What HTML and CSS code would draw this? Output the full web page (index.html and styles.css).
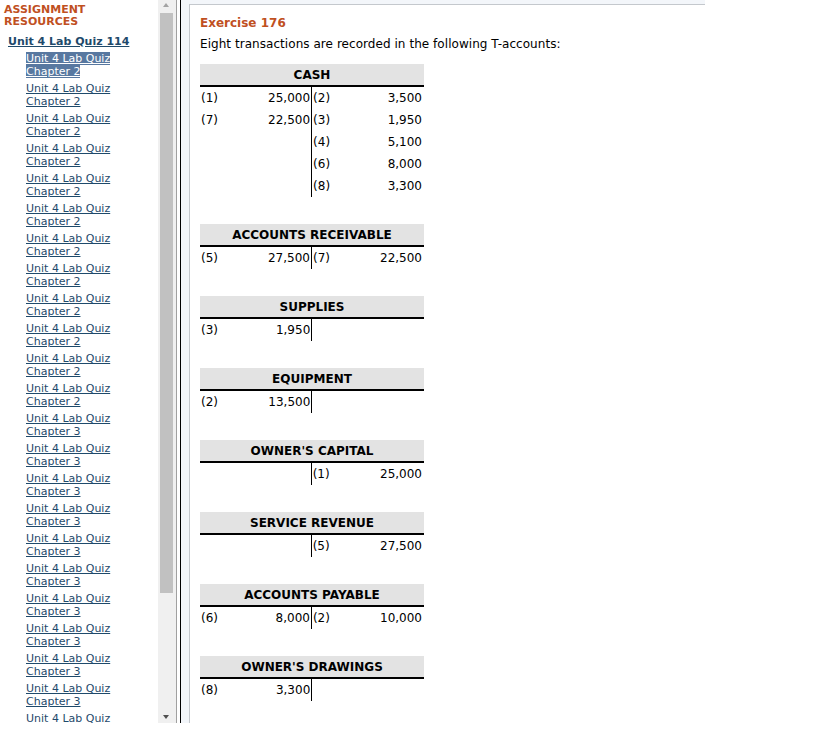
FILE: index.html
```html
<!DOCTYPE html>
<html>
<head>
<meta charset="utf-8">
<link rel="stylesheet" href="styles.css">
</head>
<body>
<div class="app">
  <div class="nav-frame">
    <div class="nav">
      <div class="nav-title">ASSIGNMENT<br>RESOURCES</div>
      <a class="nav-parent" href="#">Unit 4 Lab Quiz 114</a>
      <ul class="nav-list">
        <li><a class="sel" href="#">Unit 4 Lab Quiz<br>Chapter 2</a></li>
        <li><a href="#">Unit 4 Lab Quiz<br>Chapter 2</a></li>
        <li><a href="#">Unit 4 Lab Quiz<br>Chapter 2</a></li>
        <li><a href="#">Unit 4 Lab Quiz<br>Chapter 2</a></li>
        <li><a href="#">Unit 4 Lab Quiz<br>Chapter 2</a></li>
        <li><a href="#">Unit 4 Lab Quiz<br>Chapter 2</a></li>
        <li><a href="#">Unit 4 Lab Quiz<br>Chapter 2</a></li>
        <li><a href="#">Unit 4 Lab Quiz<br>Chapter 2</a></li>
        <li><a href="#">Unit 4 Lab Quiz<br>Chapter 2</a></li>
        <li><a href="#">Unit 4 Lab Quiz<br>Chapter 2</a></li>
        <li><a href="#">Unit 4 Lab Quiz<br>Chapter 2</a></li>
        <li><a href="#">Unit 4 Lab Quiz<br>Chapter 2</a></li>
        <li><a href="#">Unit 4 Lab Quiz<br>Chapter 3</a></li>
        <li><a href="#">Unit 4 Lab Quiz<br>Chapter 3</a></li>
        <li><a href="#">Unit 4 Lab Quiz<br>Chapter 3</a></li>
        <li><a href="#">Unit 4 Lab Quiz<br>Chapter 3</a></li>
        <li><a href="#">Unit 4 Lab Quiz<br>Chapter 3</a></li>
        <li><a href="#">Unit 4 Lab Quiz<br>Chapter 3</a></li>
        <li><a href="#">Unit 4 Lab Quiz<br>Chapter 3</a></li>
        <li><a href="#">Unit 4 Lab Quiz<br>Chapter 3</a></li>
        <li><a href="#">Unit 4 Lab Quiz<br>Chapter 3</a></li>
        <li><a href="#">Unit 4 Lab Quiz<br>Chapter 3</a></li>
        <li><a href="#">Unit 4 Lab Quiz<br>Chapter 3</a></li>
      </ul>
    </div>
    <div class="scrollbar">
      <div class="arrow arrow-up"></div>
      <div class="track"><div class="thumb"></div></div>
      <div class="arrow arrow-down"></div>
    </div>
  </div>
  <div class="divider"></div>
  <div class="main-frame">
    <div class="main-pad">
      <div class="main">
        <h1 class="ex-title">Exercise 176</h1>
        <p class="ex-text">Eight transactions are recorded in the following T-accounts:</p>

        <table class="taccount">
          <tr><th colspan="4">CASH</th></tr>
          <tr><td class="lbl">(1)</td><td class="amt mid">25,000</td><td class="lbl r">(2)</td><td class="amt">3,500</td></tr>
          <tr><td class="lbl">(7)</td><td class="amt mid">22,500</td><td class="lbl r">(3)</td><td class="amt">1,950</td></tr>
          <tr><td class="lbl"></td><td class="amt mid"></td><td class="lbl r">(4)</td><td class="amt">5,100</td></tr>
          <tr><td class="lbl"></td><td class="amt mid"></td><td class="lbl r">(6)</td><td class="amt">8,000</td></tr>
          <tr><td class="lbl"></td><td class="amt mid"></td><td class="lbl r">(8)</td><td class="amt">3,300</td></tr>
        </table>

        <table class="taccount">
          <tr><th colspan="4">ACCOUNTS RECEIVABLE</th></tr>
          <tr><td class="lbl">(5)</td><td class="amt mid">27,500</td><td class="lbl r">(7)</td><td class="amt">22,500</td></tr>
        </table>

        <table class="taccount">
          <tr><th colspan="4">SUPPLIES</th></tr>
          <tr><td class="lbl">(3)</td><td class="amt mid">1,950</td><td class="lbl r"></td><td class="amt"></td></tr>
        </table>

        <table class="taccount">
          <tr><th colspan="4">EQUIPMENT</th></tr>
          <tr><td class="lbl">(2)</td><td class="amt mid">13,500</td><td class="lbl r"></td><td class="amt"></td></tr>
        </table>

        <table class="taccount">
          <tr><th colspan="4">OWNER'S CAPITAL</th></tr>
          <tr><td class="lbl"></td><td class="amt mid"></td><td class="lbl r">(1)</td><td class="amt">25,000</td></tr>
        </table>

        <table class="taccount">
          <tr><th colspan="4">SERVICE REVENUE</th></tr>
          <tr><td class="lbl"></td><td class="amt mid"></td><td class="lbl r">(5)</td><td class="amt">27,500</td></tr>
        </table>

        <table class="taccount">
          <tr><th colspan="4">ACCOUNTS PAYABLE</th></tr>
          <tr><td class="lbl">(6)</td><td class="amt mid">8,000</td><td class="lbl r">(2)</td><td class="amt">10,000</td></tr>
        </table>

        <table class="taccount">
          <tr><th colspan="4">OWNER'S DRAWINGS</th></tr>
          <tr><td class="lbl">(8)</td><td class="amt mid">3,300</td><td class="lbl r"></td><td class="amt"></td></tr>
        </table>
      </div>
    </div>
  </div>
</div>
</body>
</html>
```

FILE: styles.css
```css
html, body {
  margin: 0;
  padding: 0;
  background: #ffffff;
}
body {
  font-family: "DejaVu Sans", Verdana, sans-serif;
  font-size: 11px;
  color: #000;
}
.app {
  display: flex;
  height: 723px;
}
.nav-frame {
  width: 175px;
  display: flex;
  overflow: hidden;
  flex: none;
}
.nav {
  width: 158px;
  box-sizing: border-box;
  padding: 4px 0 0 4px;
  overflow: hidden;
  background: #fff;
}
.nav-title {
  color: #c0501f;
  font-weight: bold;
  line-height: 12px;
}
.nav-parent {
  display: inline-block;
  margin: 7px 0 0 4px;
  color: #1f4a6b;
  font-weight: bold;
  line-height: 13px;
}
.nav-list {
  list-style: none;
  margin: 4px 0 0 0;
  padding: 0 0 0 22px;
}
.nav-list li {
  line-height: 13px;
  margin-bottom: 4px;
  white-space: nowrap;
}
.nav-list a {
  color: #1f4a6b;
}
.nav-list a.sel {
  background: #5878a0;
  color: #ffffff;
}
.scrollbar {
  width: 17px;
  flex: none;
  background: #f0f0f0;
  display: flex;
  flex-direction: column;
}
.arrow {
  height: 13px;
  flex: none;
  position: relative;
}
.arrow::after {
  content: "";
  position: absolute;
  left: 5px;
  width: 0;
  height: 0;
  border-left: 3.5px solid transparent;
  border-right: 3.5px solid transparent;
}
.arrow-up::after {
  top: 3px;
  border-bottom: 4px solid #a3a3a3;
}
.arrow-down::after {
  bottom: 4px;
  border-top: 4px solid #505050;
}
.track {
  flex: 1;
  padding: 0 2px;
}
.thumb {
  height: 580px;
  background: #c1c1c1;
}
.divider {
  width: 6px;
  flex: none;
  background: linear-gradient(to right, #f0f0f0 0 1px, #a0a0a0 1px 2px, #ffffff 2px 5px, #000000 5px 6px);
}
.main-frame {
  flex: 1;
  background: #ffffff;
}
.main-pad {
  width: 524px;
  height: 100%;
  box-sizing: border-box;
  padding: 4px 0 0 8px;
  background: #f3f6fa;
}
.main {
  height: 100%;
  box-sizing: border-box;
  background: #ffffff;
  border-top: 1px solid #c4c8cd;
  border-left: 1px solid #c4c8cd;
  padding: 10px 0 0 10px;
  overflow: hidden;
}
.ex-title {
  margin: 0;
  font-size: 12px;
  line-height: 16px;
  color: #c0501f;
  font-weight: bold;
}
.ex-text {
  margin: 5px 0 12px 0;
  font-size: 12px;
  line-height: 16px;
  letter-spacing: 0.05px;
}
.taccount {
  width: 224px;
  border-collapse: collapse;
  margin-bottom: 27px;
  font-size: 12px;
}
.taccount th {
  height: 21px;
  padding: 0;
  background: #e3e3e3;
  border-bottom: 2px solid #000;
  font-weight: bold;
  text-align: center;
  vertical-align: middle;
}
.taccount td {
  height: 22px;
  padding: 0;
  vertical-align: middle;
}
.taccount .lbl {
  width: 40px;
  padding-left: 1px;
  text-align: left;
}
.taccount .lbl.r {
  padding-left: 1px;
}
.taccount .amt {
  width: 70px;
  text-align: right;
  padding-right: 2px;
}
.taccount .amt.mid {
  padding-right: 1px;
  border-right: 1px solid #000;
}
```
